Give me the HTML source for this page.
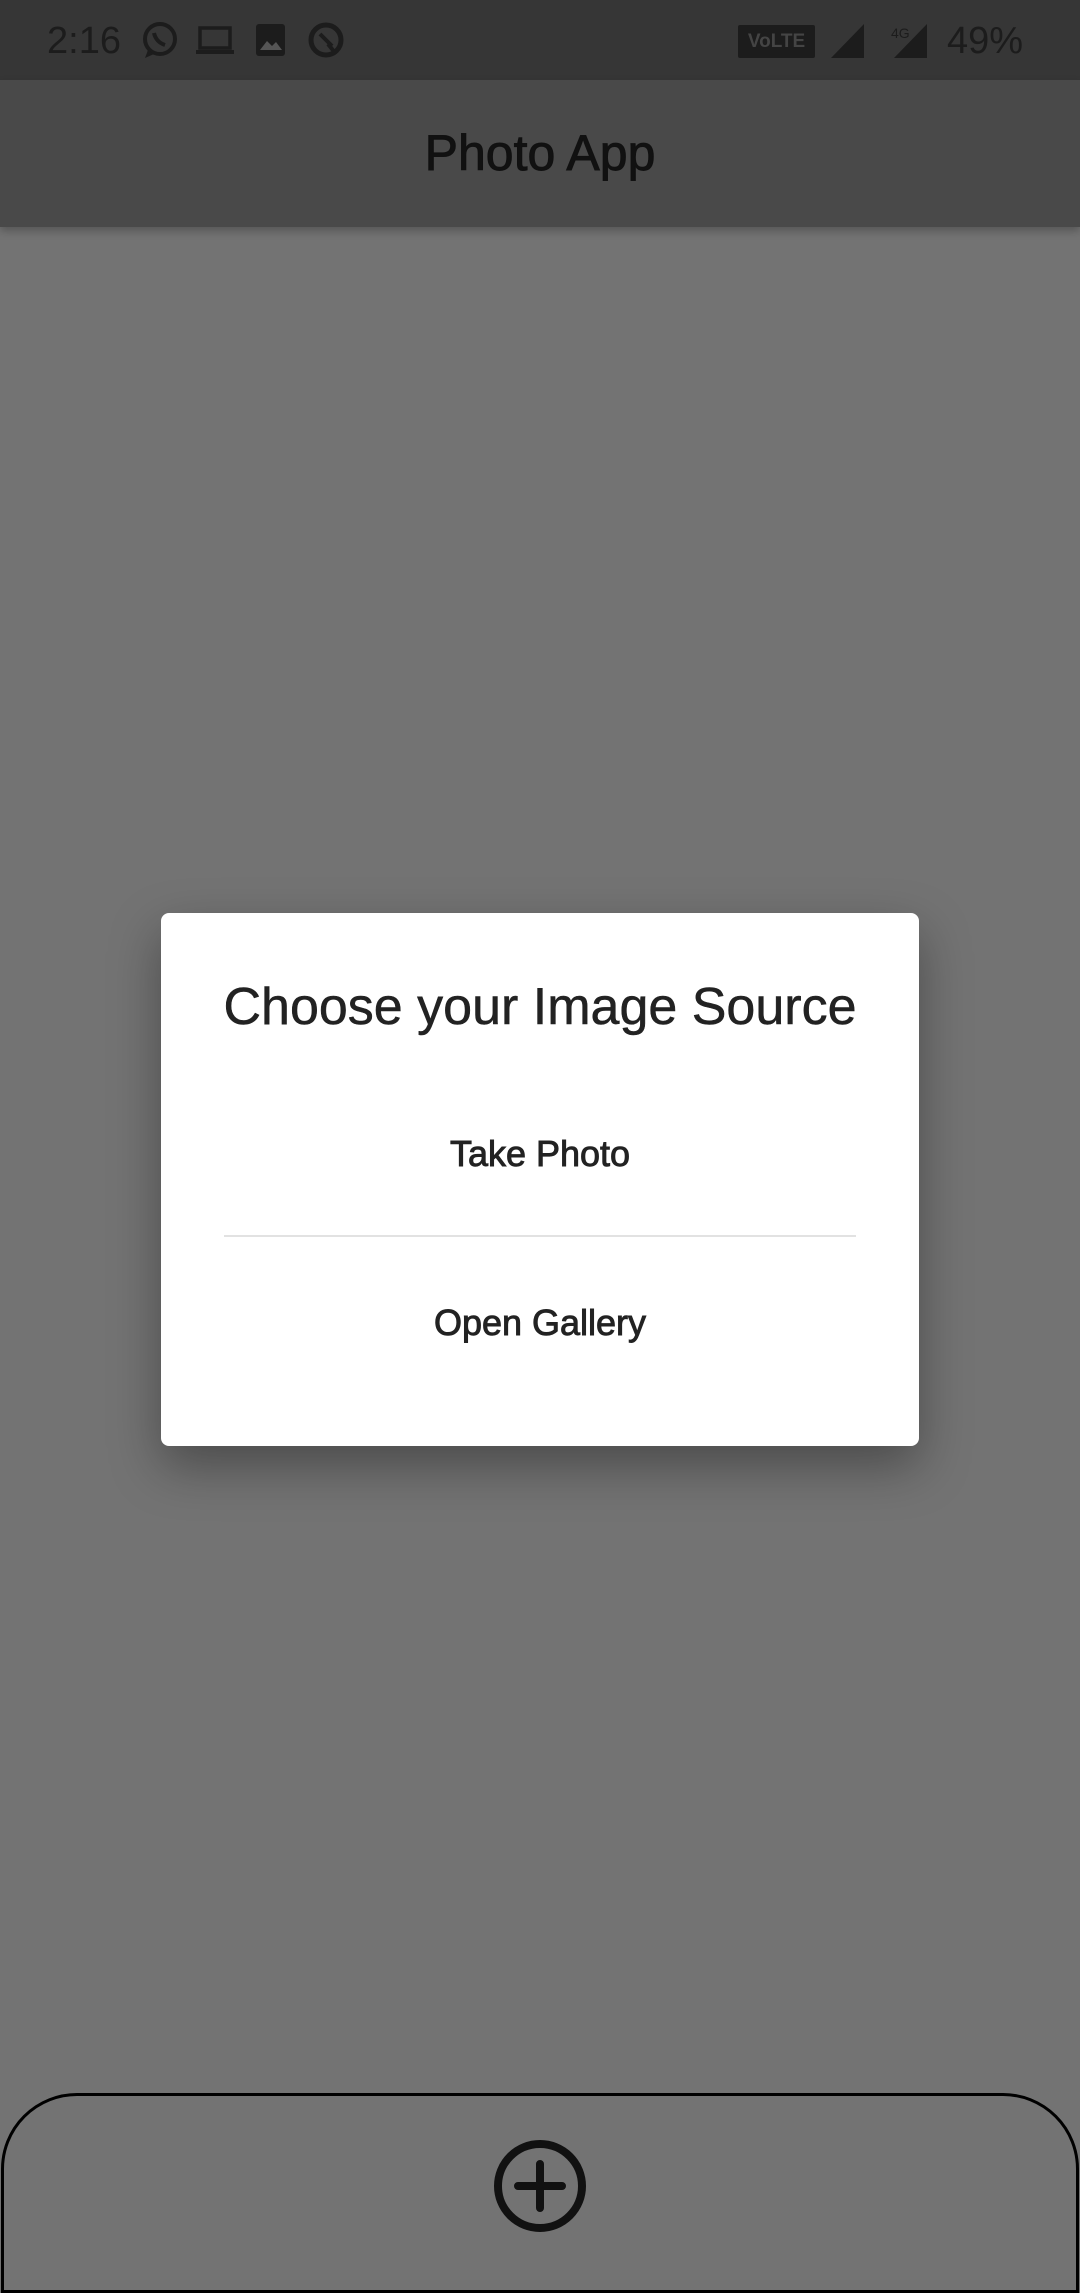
<!DOCTYPE html>
<html><head><meta charset="utf-8">
<style>
*{margin:0;padding:0;box-sizing:border-box}
html,body{width:1080px;height:2280px;overflow:hidden;background:#737373;font-family:"Liberation Sans",sans-serif}
.sb{position:absolute;left:0;top:0;width:1080px;height:80px;background:#363636}
.ab{position:absolute;left:0;top:80px;width:1080px;height:147px;background:#494949;box-shadow:0 4px 8px rgba(0,0,0,.25)}
.t{position:absolute;white-space:nowrap;color:#111}
.m{-webkit-text-stroke:0.9px currentColor}
.dlg{position:absolute;left:161px;top:913px;width:758px;height:533px;background:#fff;border-radius:8px;box-shadow:0 20px 50px rgba(0,0,0,.35)}
.bar{position:absolute;left:1px;top:2093px;width:1078px;height:200px;border:3px solid #000;border-radius:76px 76px 0 0}
</style></head><body>
<div class="sb">
 <div class="t" style="left:47px;top:20px;font-size:38px;color:#1c1c1c">2:16</div>
 <svg style="position:absolute;left:140px;top:20px" width="44" height="40" viewBox="0 0 44 40"><circle cx="20" cy="19" r="15" fill="none" stroke="#1c1c1c" stroke-width="4"/><path d="M8 30 L5 38 L14 34Z" fill="#1c1c1c"/><path d="M14 13 q2 9 11 12" stroke="#1c1c1c" stroke-width="4" fill="none"/></svg>
 <svg style="position:absolute;left:196px;top:26px" width="40" height="30"><rect x="4" y="2" width="30" height="20" fill="none" stroke="#1c1c1c" stroke-width="3.5"/><rect x="0" y="24" width="38" height="4" fill="#1c1c1c"/></svg>
 <svg style="position:absolute;left:256px;top:24px" width="30" height="32"><rect x="0" y="0" width="29" height="32" rx="3" fill="#1c1c1c"/><path d="M4 26 L11 17 L16 22 L20 18 L26 26Z" fill="#555"/></svg>
 <svg style="position:absolute;left:306px;top:20px" width="40" height="40"><circle cx="20" cy="20" r="15" fill="none" stroke="#1c1c1c" stroke-width="5"/><path d="M14 14 L26 26 M22 24 L30 34" stroke="#1c1c1c" stroke-width="4"/></svg>
 <div style="position:absolute;left:738px;top:25px;width:77px;height:33px;background:#1c1c1c;border-radius:2px;color:#444;font-size:19px;font-weight:bold;line-height:33px;text-align:center">VoLTE</div>
 <svg style="position:absolute;left:828px;top:22px" width="110" height="38"><path d="M3 36 L36 36 L36 2Z" fill="#1c1c1c"/><path d="M66 36 L99 36 L99 2Z" fill="#1c1c1c"/><text x="63" y="16" font-size="14" font-family="Liberation Sans" fill="#1c1c1c">4G</text></svg>
 <div class="t" style="left:947px;top:20px;font-size:38px;color:#1c1c1c">49%</div>
</div>
<div class="ab"><div class="t m" style="left:0;width:1080px;text-align:center;top:44px;font-size:50px">Photo App</div></div>
<div class="dlg">
 <div class="t" style="left:0;width:758px;text-align:center;top:64px;font-size:52px;color:#222;-webkit-text-stroke:0.5px #222">Choose your Image Source</div>
 <div class="t m" style="left:0;width:758px;text-align:center;top:220px;font-size:36px;color:#222">Take Photo</div>
 <div style="position:absolute;left:63px;top:322px;width:632px;height:2px;background:#e2e2e2"></div>
 <div class="t m" style="left:0;width:758px;text-align:center;top:389px;font-size:36px;color:#222">Open Gallery</div>
</div>
<div class="bar"></div>
<svg style="position:absolute;left:492px;top:2138px" width="96" height="96" viewBox="0 0 96 96"><circle cx="48" cy="48" r="42" fill="none" stroke="#111" stroke-width="8"/><path d="M48 26 V70 M26 48 H70" stroke="#111" stroke-width="8" stroke-linecap="round"/></svg>
</body></html>
